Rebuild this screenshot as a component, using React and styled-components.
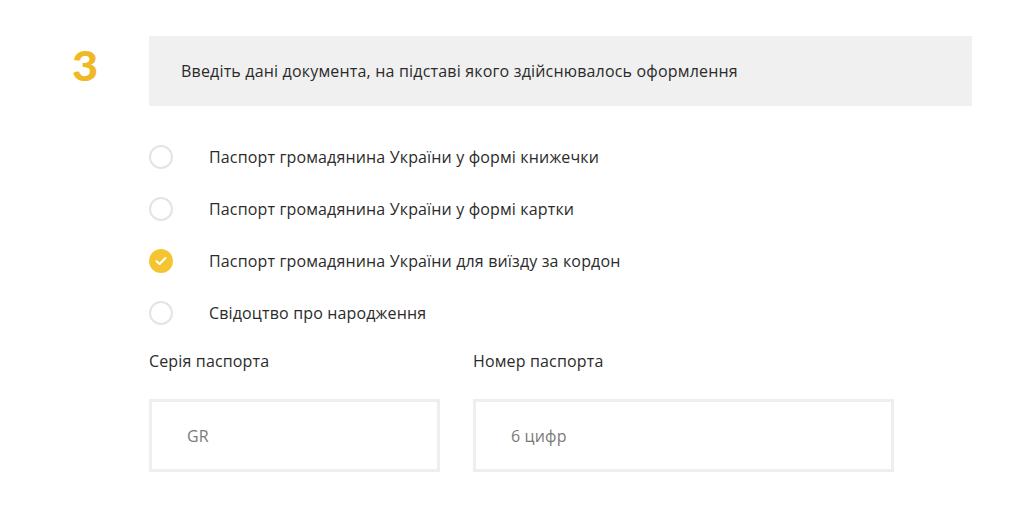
import React, { useState } from 'react';
import styled, { createGlobalStyle } from 'styled-components';

const GlobalStyle = createGlobalStyle`
  html, body {
    margin: 0;
    padding: 0;
    background: #ffffff;
  }
  body {
    font-family: "Open Sans", "Liberation Sans", sans-serif;
    color: #333333;
    letter-spacing: 0.15px;
  }
`

const Page = styled.div`
  width: 1024px;
  height: 516px;
  display: grid;
  grid-template-columns: 149px 823px;
  padding-top: 36px;
  box-sizing: border-box;
`

const StepNumber = styled.div`
  font-family: "Lato", "Liberation Sans", sans-serif;
  font-weight: 900;
  font-size: 41px;
  line-height: 1;
  color: #f0b824;
  padding: 9px 0 0 72px;
  transform: scaleX(1.1);
  transform-origin: 72px 0;
`

const Content = styled.div`
  display: flex;
  flex-direction: column;
`

const Banner = styled.div`
  height: 70px;
  background: #f0f0f0;
  display: flex;
  align-items: center;
  padding-left: 32px;
  font-size: 16px;
  color: #2b2b2b;
  letter-spacing: 0.18px;
`

const Options = styled.div`
  display: flex;
  flex-direction: column;
  margin-top: 25px;
`

const Option = styled.label`
  display: flex;
  align-items: center;
  height: 52px;
  gap: 36px;
  font-size: 16px;
  color: #2b2b2b;
  cursor: pointer;
`

const Radio = styled.span`
  width: 24px;
  height: 24px;
  box-sizing: border-box;
  border-radius: 50%;
  border: ${p => (p.$checked ? 'none' : '2px solid #e4e4e4')};
  background: ${p => (p.$checked ? '#f5c431' : '#ffffff')};
  display: flex;
  align-items: center;
  justify-content: center;
  flex-shrink: 0;
`

const Fields = styled.div`
  display: flex;
  gap: 33px;
  margin-top: 10px;
`

const Field = styled.div`
  display: flex;
  flex-direction: column;
  width: ${p => p.$width}px;
`

const Label = styled.div`
  font-size: 16px;
  color: #2b2b2b;
  height: 24px;
  line-height: 24px;
`

const Input = styled.input`
  margin-top: 26px;
  height: 73px;
  box-sizing: border-box;
  border: 3px solid #eeeeee;
  padding: 0 0 0 35px;
  font-family: "Open Sans", "Liberation Sans", sans-serif;
  font-size: 16px;
  letter-spacing: 0.15px;
  color: #333333;
  outline: none;

  &::placeholder {
    color: #7a7a7a;
  }
`

const options = [
  'Паспорт громадянина України у формі книжечки',
  'Паспорт громадянина України у формі картки',
  'Паспорт громадянина України для виїзду за кордон',
  'Свідоцтво про народження'
];

function Check() {
  return (
    <svg width="12" height="10" viewBox="0 0 12 10" fill="none">
      <path d="M1.5 5.2 L4.6 8 L10.5 2" stroke="#ffffff" strokeWidth="2" strokeLinecap="round" strokeLinejoin="round" />
    </svg>
  );
}

export default function App() {
  const [selected, setSelected] = useState(2);

  return (
    <>
      <GlobalStyle />
      <Page>
        <StepNumber>3</StepNumber>
        <Content>
          <Banner>Введіть дані документа, на підставі якого здійснювалось оформлення</Banner>
          <Options>
            {options.map((text, i) => (
              <Option key={text} onClick={() => setSelected(i)}>
                <Radio $checked={selected === i}>{selected === i && <Check />}</Radio>
                {text}
              </Option>
            ))}
          </Options>
          <Fields>
            <Field $width={291}>
              <Label>Серія паспорта</Label>
              <Input placeholder="GR" />
            </Field>
            <Field $width={421}>
              <Label>Номер паспорта</Label>
              <Input placeholder="6 цифр" />
            </Field>
          </Fields>
        </Content>
      </Page>
    </>
  );
}
